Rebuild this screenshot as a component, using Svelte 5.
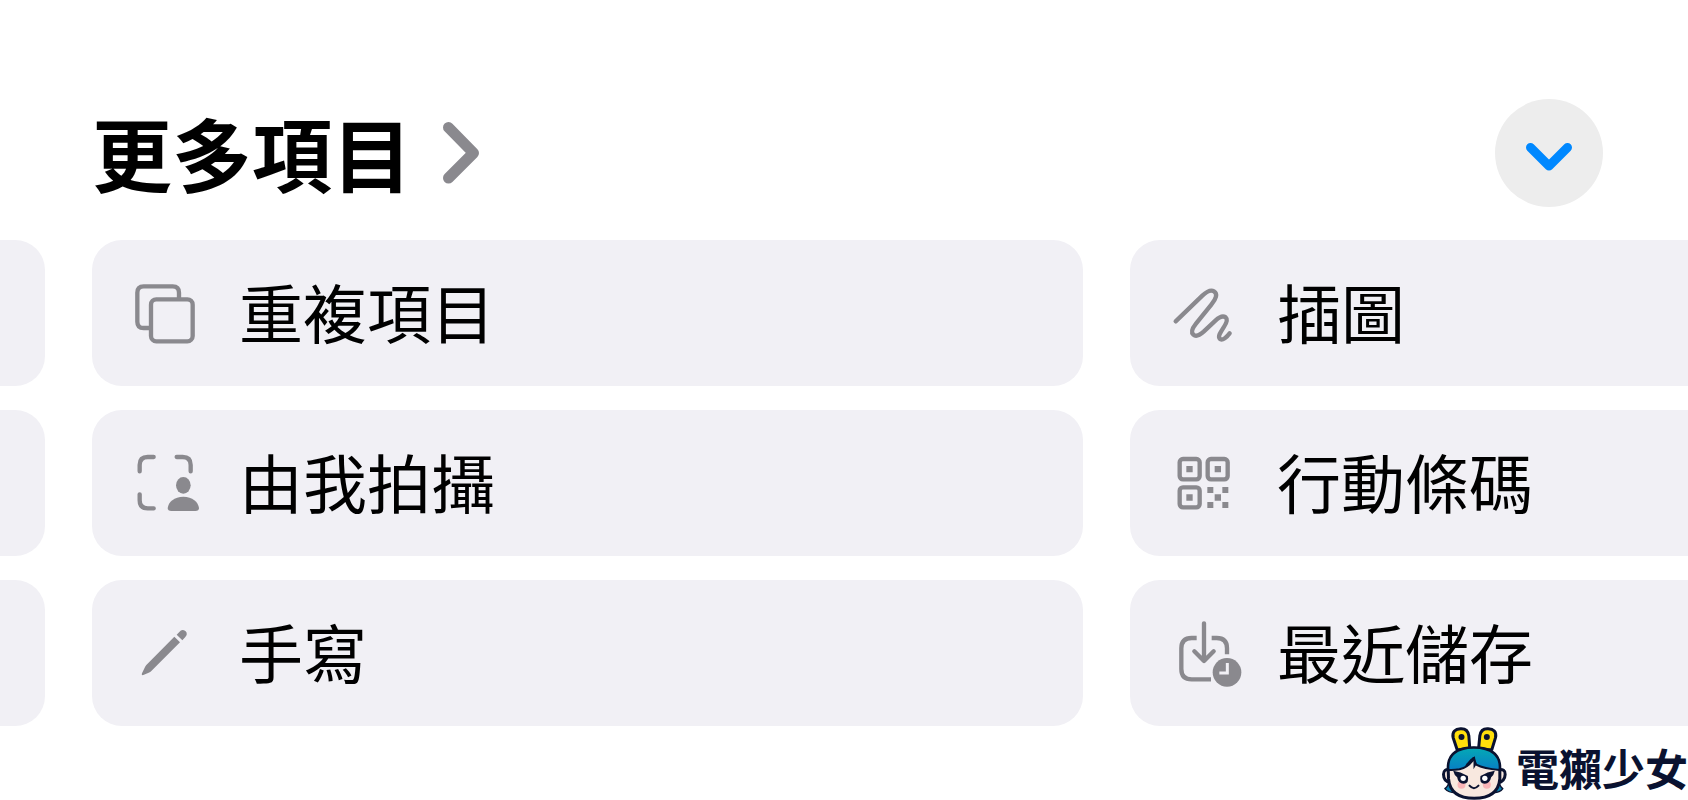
<script>
  const items = [
    { icon: 'duplicate', label: '重複項目' },
    { icon: 'person', label: '由我拍攝' },
    { icon: 'pencil', label: '手寫' },
    { icon: 'scribble', label: '插圖' },
    { icon: 'qr', label: '行動條碼' },
    { icon: 'saved', label: '最近儲存' }
  ];
  let open = $state(true);
</script>

{#snippet glyph(name)}
  {#if name === 'duplicate'}
    <svg class="icon" viewBox="0 0 252 258" aria-hidden="true">
      <rect x="93" y="88" width="125" height="126" rx="16" />
      <path d="M177 84V68Q177 49 158 49H71Q52 49 52 68V155Q52 174 71 174H88" />
    </svg>
  {:else if name === 'person'}
    <svg class="icon" viewBox="0 0 252 258" aria-hidden="true">
      <path class="round" d="M59 94V75Q59 51 83 51H101M170 51H188Q212 51 212 75V94M59 163V181Q59 205 83 205H101" />
      <ellipse class="solid" cx="190" cy="136" rx="22" ry="25" />
      <path class="solid" d="M154 213Q143 213 143 204C145 186 163 170 190 170S235 186 237 204Q237 213 226 213Z" />
    </svg>
  {:else if name === 'pencil'}
    <svg class="icon" viewBox="0 0 252 258" aria-hidden="true">
      <path class="solid" d="M163 80L180 97L94 183Q91 186 86 188L70 195Q63 197 66 190L74 173Q76 168 79 165Z" />
      <path class="solid" d="M170 74L178 66Q184 58 192 61Q198 63 200 68Q202 76 196 81L187 91Z" />
    </svg>
  {:else if name === 'scribble'}
    <svg class="icon" viewBox="-6 0 252 258" aria-hidden="true">
      <path class="round" d="M47 154L127 77C145 60 155 60 162 64C174 71 168 87 154 104L108 161C96 176 92 187 100 194C109 202 121 194 131 185L167 151C181 138 190 137 197 142C205 149 199 160 191 172C182 186 173 199 179 206C187 214 202 200 209 190" />
    </svg>
  {:else if name === 'qr'}
    <svg class="icon" viewBox="-6 0 252 258" aria-hidden="true">
      <rect x="59" y="57" width="60" height="61" rx="10" />
      <rect x="143" y="57" width="60" height="61" rx="10" />
      <rect x="59" y="142" width="60" height="60" rx="10" />
      <path class="solid" d="M79 78h19v19H79zM164 78h19v19H164zM79 163h19v19H79zM142 141h18v18H142zM187 141h18v18H187zM164 163h19v19H164zM142 186h18v18H142zM187 186h18v18H187z" />
    </svg>
  {:else}
    <svg class="icon" viewBox="-6 0 252 258" aria-hidden="true">
      <path d="M110 84H95Q64 84 64 115V177Q64 208 95 208H153M155 84H170Q201 84 201 115V133" />
      <path class="round" d="M132 40V151M103 124L132 153L161 124" />
      <circle class="solid" cx="201" cy="187" r="43" />
      <path class="hand" d="M202 159V189H178" />
    </svg>
  {/if}
{/snippet}

<main>
  <header>
    <h1>
      <a href="#more">
        <span>更多項目</span>
        <svg class="next" viewBox="0 0 36 62" aria-hidden="true"><path d="M5.500 5.500L30.500 31L5.500 56" /></svg>
      </a>
    </h1>
    <button class="toggle" aria-label="收合" aria-expanded={open} onclick={() => (open = !open)}>
      <svg viewBox="0 0 46 28" aria-hidden="true"><path d="M4.500 4.500L23 23L41.500 4.500" /></svg>
    </button>
  </header>

  {#if open}
    <div class="shelf">
      <div class="edge" aria-hidden="true"></div>
      <div class="edge" aria-hidden="true"></div>
      <div class="edge" aria-hidden="true"></div>
      {#each items as item, i}
        <button class="card" class:last={i > 2}>
          {@render glyph(item.icon)}
          <span>{item.label}</span>
        </button>
      {/each}
    </div>
  {/if}

  <div class="brand">
    <svg viewBox="36 34 200 222" aria-hidden="true">
      <defs>
        <linearGradient id="hair" x1="0" y1="0" x2="0" y2="1">
          <stop offset="0" stop-color="#04a9b5" />
          <stop offset="1" stop-color="#087fc5" />
        </linearGradient>
      </defs>
      <g stroke="#0a1230" stroke-width="9" stroke-linejoin="round">
        <path fill="#ffdf0b" d="M84 105L72 69C68 51 79 43 94 42C109 41 117 49 119 63L122 105Z" />
        <path fill="#ffdf0b" d="M188 105L199 69C203 51 193 43 177 42C163 41 154 49 152 63L148 105Z" />
        <path fill="#087fae" d="M60 198Q58 215 47 222Q60 236 84 234L188 234Q211 236 221 222Q211 215 209 198Z" stroke-width="4" />
        <path fill="#f8e8df" d="M62 165Q43 162 43 179Q43 201 64 204M207 165Q229 162 228 179Q227 201 206 204" />
        <path fill="#f8e8df" d="M57 160Q57 99 134 99Q212 99 212 160V192Q207 251 135 251Q63 251 58 192Z" />
        <path fill="url(#hair)" d="M58 166C53 123 82 99 134 99S216 123 211 166C187 164 158 159 141 150L133 130C126 147 111 159 91 164Q74 167 58 166Z" stroke-width="6" />
      </g>
      <path d="M137 125Q116 135 106 158L121 151L133 139V164L142 149Q139 140 137 125Z" fill="#0a1230" />
      <circle cx="97" cy="67" r="9" fill="#0a1230" />
      <circle cx="173" cy="67" r="9" fill="#0a1230" />
      <circle cx="97" cy="210" r="12" fill="#f9b4b7" />
      <circle cx="173" cy="210" r="12" fill="#f9b4b7" />
      <path d="M72 168Q94 171 116 184Q121 207 103 207Q87 207 84 188Q75 181 72 168ZM197 168Q175 171 154 184Q149 207 167 207Q182 207 186 188Q194 181 197 168Z" fill="#0a1230" />
      <circle cx="102" cy="191" r="8" fill="#fff" />
      <circle cx="167" cy="191" r="8" fill="#fff" />
      <path d="M121 213Q134 228 148 213" fill="none" stroke="#0a1230" stroke-width="6" stroke-linecap="round" />
    </svg>
    <span>電獺少女</span>
  </div>
</main>

<style>
  :global(body) {
    margin: 0;
    background: #fff;
  }
  main {
    position: relative;
    box-sizing: border-box;
    min-height: 100vh;
    padding: 99px 0 74px;
    overflow: hidden;
    font-family: 'Noto Sans CJK TC', 'Noto Sans', sans-serif;
    color: #000;
  }
  header {
    display: flex;
    align-items: center;
    justify-content: space-between;
    padding: 0 85px 0 92px;
    margin-bottom: 33px;
  }
  h1 {
    margin: 0;
    font-size: 80px;
    line-height: 104px;
    font-weight: 700;
  }
  h1 a {
    display: flex;
    align-items: center;
    gap: 31px;
    color: inherit;
    text-decoration: none;
  }
  h1 span {
    padding-bottom: 4px;
  }
  .next {
    width: 36px;
    height: 62px;
  }
  .next path,
  .toggle path {
    fill: none;
    stroke: #8a898e;
    stroke-width: 11;
    stroke-linecap: round;
    stroke-linejoin: round;
  }
  button {
    border: 0;
    font: inherit;
    color: inherit;
    cursor: pointer;
  }
  .toggle {
    display: flex;
    align-items: center;
    justify-content: center;
    width: 108px;
    height: 108px;
    padding: 8px 0 0;
    border-radius: 50%;
    background: #ededed;
  }
  .toggle svg {
    width: 46px;
    height: 28px;
  }
  .toggle path {
    stroke: #0088ff;
    stroke-width: 9;
  }
  .shelf {
    display: grid;
    grid-template-columns: 45px 991fr 558fr;
    grid-template-rows: repeat(3, auto);
    grid-auto-flow: column;
    gap: 24px 47px;
  }
  .edge,
  .card {
    background: #f1f0f5;
    border-radius: 30px;
  }
  .edge {
    border-radius: 0 30px 30px 0;
  }
  .card {
    display: flex;
    align-items: center;
    gap: 35px;
    padding: 25px 28px;
    font-size: 64px;
    line-height: 90px;
    white-space: nowrap;
    text-align: left;
  }
  .card span {
    padding-bottom: 6px;
  }
  .card.last {
    border-radius: 30px 0 0 30px;
  }
  .icon {
    flex: none;
    width: 84px;
    height: 86px;
    fill: none;
    stroke: #8a898e;
    stroke-width: 13;
  }
  .round {
    stroke-linecap: round;
    stroke-linejoin: round;
  }
  .solid {
    fill: #8a898e;
    stroke: none;
  }
  .hand {
    stroke: #f1f0f5;
    stroke-width: 9;
  }
  .brand {
    position: absolute;
    right: 0;
    bottom: 0;
    display: flex;
    align-items: center;
    gap: 8px;
    color: #0a1230;
    font-size: 43px;
    line-height: 60px;
    font-weight: 700;
  }
  .brand svg {
    width: 67px;
    height: 74px;
  }
  .brand span {
    padding-top: 8px;
  }
</style>
